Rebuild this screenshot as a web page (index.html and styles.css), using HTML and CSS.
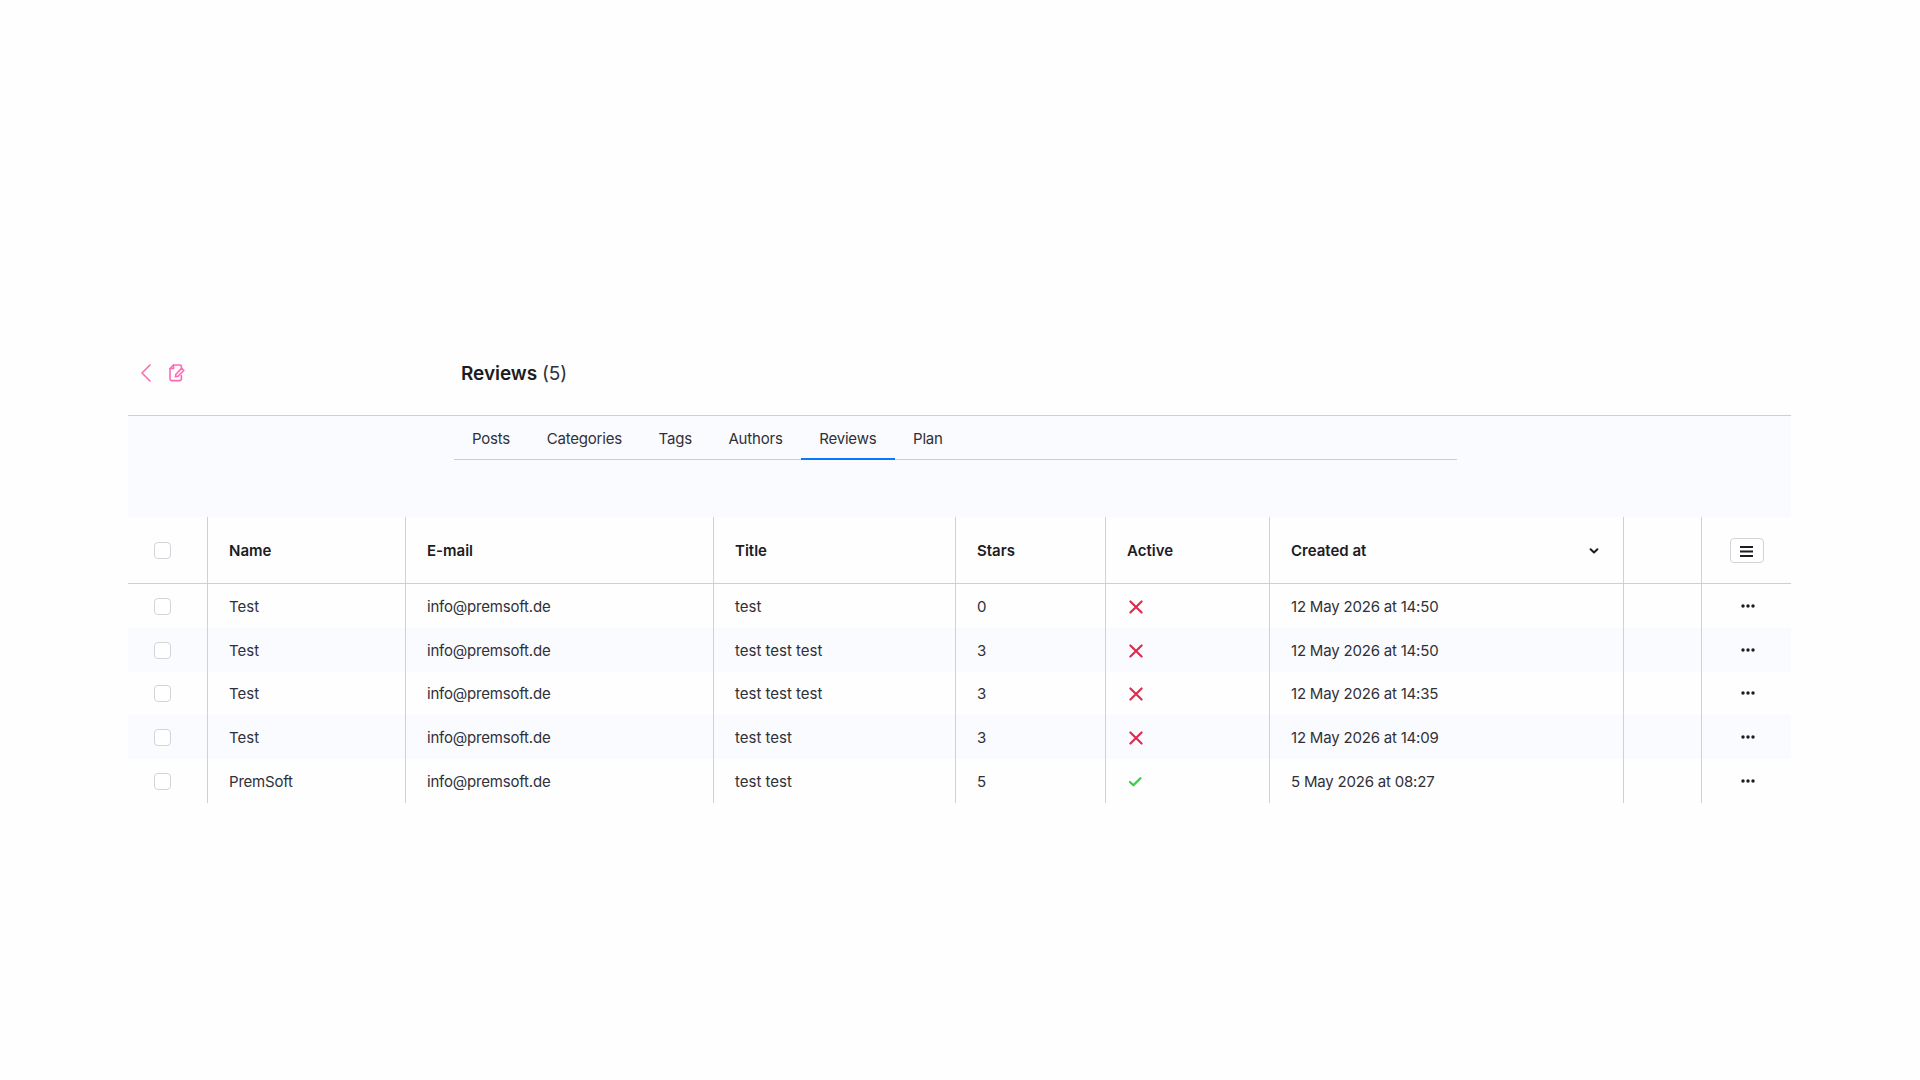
FILE: index.html
```html
<!DOCTYPE html>
<html lang="en">
<head>
    <meta charset="UTF-8">
    <meta name="viewport" content="width=device-width, initial-scale=1.0">
    <title>Reviews</title>
    <link rel="stylesheet" href="styles.css">
</head>
<body>
    <!-- Shared icons -->
    <svg class="sprite" width="0" height="0">
        <symbol id="icon-cross" viewBox="0 0 14 14">
            <path d="M1.4 1.4 12.6 12.6M12.6 1.4 1.4 12.6" fill="none" stroke="#de294c" stroke-width="2.1" stroke-linecap="round"/>
        </symbol>
        <symbol id="icon-check" viewBox="0 0 14 14">
            <path d="M.9 7 4.4 10.2 11.4 3.2" fill="none" stroke="#37d046" stroke-width="2.3" stroke-linecap="round" stroke-linejoin="round"/>
        </symbol>
        <symbol id="icon-more" viewBox="0 0 14 4">
            <circle cx="2" cy="2" r="1.7"/>
            <circle cx="7" cy="2" r="1.7"/>
            <circle cx="12" cy="2" r="1.7"/>
        </symbol>
    </svg>

    <div class="page">
        <header class="header">
            <div class="header-nav">
                <svg class="icon-back" width="12" height="18" viewBox="0 0 12 18">
                    <path d="M10 1 2 9 10 17" fill="none" stroke="#ff68b4" stroke-width="1.6" stroke-linecap="round" stroke-linejoin="round"/>
                </svg>
                <svg class="icon-edit" width="16" height="18" viewBox="0 0 16 18">
                    <g fill="none" stroke="#ff68b4" stroke-width="1.6" stroke-linecap="round" stroke-linejoin="round">
                        <path d="M12.4 4.6V2.4Q12.4 1 11 1H4.5L1 4.5V15Q1 16.6 2.6 16.6H10.8Q12.4 16.6 12.4 15V11.5"/>
                        <path d="M4.5 1V4.5H1"/>
                        <path d="M12.7 4.4 14.8 6.5 9 12.3 6.4 12.8 6.9 10.2Z"/>
                    </g>
                </svg>
            </div>
            <h1>Reviews <span>(5)</span></h1>
        </header>

        <div class="toolbar">
            <nav class="tabs">
                <a class="tab">Posts</a>
                <a class="tab">Categories</a>
                <a class="tab">Tags</a>
                <a class="tab">Authors</a>
                <a class="tab active">Reviews</a>
                <a class="tab">Plan</a>
            </nav>
        </div>

        <table class="reviews-table">
            <colgroup>
                <col class="col-select">
                <col class="col-name">
                <col class="col-email">
                <col class="col-title">
                <col class="col-stars">
                <col class="col-active">
                <col class="col-created">
                <col class="col-spacer">
                <col class="col-actions">
            </colgroup>
            <thead>
                <tr>
                    <th class="select"><span class="checkbox"></span></th>
                    <th>Name</th>
                    <th>E-mail</th>
                    <th>Title</th>
                    <th>Stars</th>
                    <th>Active</th>
                    <th>
                        <div class="sorted">
                            Created at
                            <svg width="10" height="8" viewBox="0 0 10 8">
                                <path d="M1.6 2.2 5 5.4 8.4 2.2" fill="none" stroke="#1c1c22" stroke-width="2" stroke-linecap="round" stroke-linejoin="round"/>
                            </svg>
                        </div>
                    </th>
                    <th></th>
                    <th class="actions">
                        <button class="columns-btn">
                            <svg width="13" height="11" viewBox="0 0 13 11">
                                <path d="M0 1H13M0 5.5H13M0 10H13" stroke="#1c1c22" stroke-width="2"/>
                            </svg>
                        </button>
                    </th>
                </tr>
            </thead>
            <tbody>
                <tr>
                    <td class="select"><span class="checkbox"></span></td>
                    <td>Test</td>
                    <td class="tight">info@premsoft.de</td>
                    <td>test</td>
                    <td>0</td>
                    <td><svg class="status"><use href="#icon-cross"/></svg></td>
                    <td class="tight">12 May 2026 at 14:50</td>
                    <td></td>
                    <td class="actions"><svg class="more"><use href="#icon-more"/></svg></td>
                </tr>
                <tr>
                    <td class="select"><span class="checkbox"></span></td>
                    <td>Test</td>
                    <td class="tight">info@premsoft.de</td>
                    <td>test test test</td>
                    <td>3</td>
                    <td><svg class="status"><use href="#icon-cross"/></svg></td>
                    <td class="tight">12 May 2026 at 14:50</td>
                    <td></td>
                    <td class="actions"><svg class="more"><use href="#icon-more"/></svg></td>
                </tr>
                <tr>
                    <td class="select"><span class="checkbox"></span></td>
                    <td>Test</td>
                    <td class="tight">info@premsoft.de</td>
                    <td>test test test</td>
                    <td>3</td>
                    <td><svg class="status"><use href="#icon-cross"/></svg></td>
                    <td class="tight">12 May 2026 at 14:35</td>
                    <td></td>
                    <td class="actions"><svg class="more"><use href="#icon-more"/></svg></td>
                </tr>
                <tr>
                    <td class="select"><span class="checkbox"></span></td>
                    <td>Test</td>
                    <td class="tight">info@premsoft.de</td>
                    <td>test test</td>
                    <td>3</td>
                    <td><svg class="status"><use href="#icon-cross"/></svg></td>
                    <td class="tight">12 May 2026 at 14:09</td>
                    <td></td>
                    <td class="actions"><svg class="more"><use href="#icon-more"/></svg></td>
                </tr>
                <tr>
                    <td class="select"><span class="checkbox"></span></td>
                    <td class="tight">PremSoft</td>
                    <td class="tight">info@premsoft.de</td>
                    <td>test test</td>
                    <td>5</td>
                    <td><svg class="status"><use href="#icon-check"/></svg></td>
                    <td class="tight">5 May 2026 at 08:27</td>
                    <td></td>
                    <td class="actions"><svg class="more"><use href="#icon-more"/></svg></td>
                </tr>
            </tbody>
        </table>
    </div>
</body>
</html>
```

FILE: styles.css
```css
* {
    box-sizing: border-box;
    margin: 0;
    padding: 0;
}

body {
    background-color: #fefefe;
    color: #303038;
    font-family: Inter, sans-serif;
    font-size: 15px;
}

.sprite {
    display: block;
}

.page {
    width: 1663px;
    margin: 332px 0 0 128px;
}

.header {
    display: flex;
    align-items: center;
    height: 84px;
    padding-bottom: 1px;
    border-bottom: 1px solid #cdced2;
}

.header-nav {
    display: flex;
    align-items: center;
    gap: 17px;
    width: 333px;
    padding-left: 12px;
}

.header svg {
    display: block;
}

h1 {
    padding-top: 1px;
    color: #1c1c22;
    font-size: 19px;
    font-weight: 600;
    letter-spacing: -0.05px;
}

h1 span {
    color: #303038;
    font-weight: 400;
}

.toolbar {
    height: 101px;
    padding-left: 326px;
    background-color: #fafbff;
}

.tabs {
    display: flex;
    width: 1003px;
    height: 44px;
    border-bottom: 1px solid #cdced2;
}

.tab {
    height: 44px;
    padding: 0 18.3px;
    line-height: 45px;
    letter-spacing: -0.2px;
}

.tab:first-child {
    padding-left: 18px;
}

.tab.active {
    border-bottom: 2px solid #0a78ff;
}

.reviews-table {
    width: 1663px;
    table-layout: fixed;
    border-collapse: separate;
    border-spacing: 0;
}

.col-select { width: 80px; }
.col-name { width: 198px; }
.col-email { width: 308px; }
.col-title { width: 242px; }
.col-stars { width: 150px; }
.col-active { width: 164px; }
.col-created { width: 354px; }
.col-spacer { width: 78px; }
.col-actions { width: 89px; }

th, td {
    height: 43.8px;
    padding: 1px 21px 0;
    border-right: 1px solid #d0d1d6;
    text-align: left;
    vertical-align: middle;
    white-space: nowrap;
}

th {
    height: 67px;
    border-bottom: 1px solid #cdced2;
    color: #1c1c22;
    font-weight: 600;
}

th:last-child,
td:last-child {
    border-right: none;
}

tbody tr:nth-child(even) {
    background-color: #fafbff;
}

.tight {
    letter-spacing: -0.2px;
}

.select {
    padding: 1px 0 0 26px;
}

.checkbox {
    display: block;
    width: 17px;
    height: 17px;
    border: 1px solid #d3d4da;
    border-radius: 4px;
    background-color: #fff;
}

.sorted {
    display: flex;
    align-items: center;
    justify-content: space-between;
    padding-right: 3px;
}

.status {
    display: block;
    width: 14px;
    height: 14px;
    margin: 1px 0 0 2px;
}

.actions {
    padding: 0 0 0 28px;
}

th.actions {
    padding-top: 1px;
}

.columns-btn {
    display: flex;
    align-items: center;
    justify-content: center;
    width: 34px;
    height: 25px;
    padding: 1px 1px 0 0;
    border: 1px solid #d3d4da;
    border-radius: 4px;
    background-color: #fff;
}

.more {
    display: block;
    width: 14px;
    height: 4px;
    margin-left: 11px;
    fill: #1c1c22;
}
```
